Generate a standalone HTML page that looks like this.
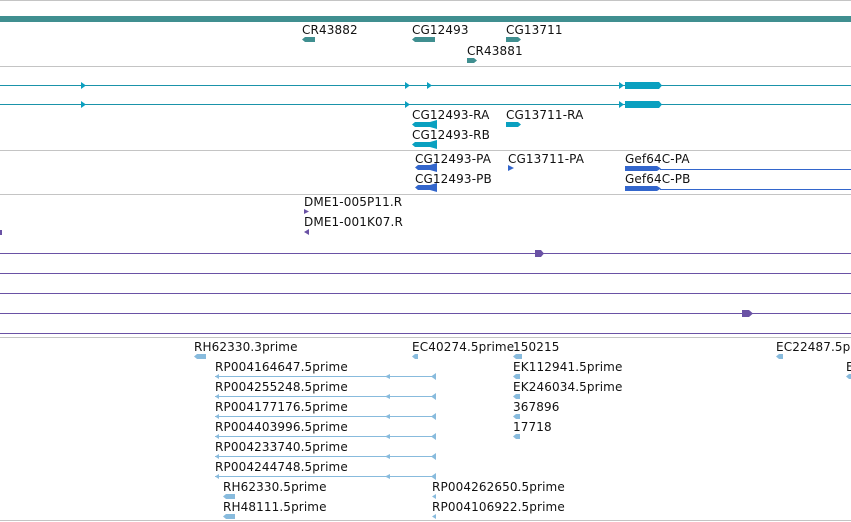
<!DOCTYPE html>
<html><head><meta charset="utf-8"><style>
html,body{margin:0;padding:0;background:#fff;width:851px;height:522px;overflow:hidden}
svg{display:block}
text{font-family:"DejaVu Sans","Liberation Sans",sans-serif;font-size:12px;fill:#111;letter-spacing:0.12px}
</style></head><body>
<svg width="851" height="522" viewBox="0 0 851 522" xmlns="http://www.w3.org/2000/svg">
<g fill="#c4c4c4">
<rect x="0" y="0" width="851" height="1"/>
<rect x="0" y="66" width="851" height="1"/>
<rect x="0" y="150" width="851" height="1"/>
<rect x="0" y="194" width="851" height="1"/>
<rect x="0" y="337" width="851" height="1"/>
<rect x="0" y="520" width="851" height="1"/>
</g>
<rect x="0" y="16" width="851" height="6" fill="#408f90"/>
<g fill="#408f90">
<polygon points="302,39.5 305,37 315,37 315,42 305,42"/>
<polygon points="412,39.5 415,37 435,37 435,42 415,42"/>
<polygon points="506,37 518,37 521,39.5 518,42 506,42"/>
<polygon points="467,58 474,58 477,60.5 474,63 467,63"/>
</g>
<text x="302" y="34">CR43882</text>
<text x="412" y="34">CG12493</text>
<text x="506" y="34">CG13711</text>
<text x="467" y="55">CR43881</text>
<g fill="#1a93aa">
<rect x="0" y="85" width="851" height="1"/>
<rect x="0" y="104" width="851" height="1"/>
</g>
<g fill="#0aa0c0">
<polygon points="81,82 86,85.5 81,89"/>
<polygon points="405,82 410,85.5 405,89"/>
<polygon points="427,82 432,85.5 427,89"/>
<polygon points="619,82 624,85.5 619,89"/>
<polygon points="625,82 659,82 662,85.5 659,89 625,89"/>
<polygon points="81,101 86,104.5 81,108"/>
<polygon points="405,101 410,104.5 405,108"/>
<polygon points="619,101 624,104.5 619,108"/>
<polygon points="625,101 659,101 662,104.5 659,108 625,108"/>
<polygon points="412,124.5 415,122 430,122 437,120 437,129 430,127 415,127"/>
<polygon points="412,144.5 415,142 430,142 437,140 437,149 430,147 415,147"/>
<polygon points="506,122 518,122 521,124.5 518,127 506,127"/>
</g>
<text x="412" y="119">CG12493-RA</text>
<text x="506" y="119">CG13711-RA</text>
<text x="412" y="139">CG12493-RB</text>
<g fill="#3366cc">
<polygon points="415,167.5 418,165 430,165 437,163 437,172 430,170 418,170"/>
<polygon points="415,187.5 418,185 430,185 437,183 437,192 430,190 418,190"/>
<polygon points="508,165 514,168 508,171"/>
<polygon points="625,166 657,166 661,168.5 657,171 625,171"/>
<polygon points="625,186 657,186 661,188.5 657,191 625,191"/>
<rect x="660" y="169" width="191" height="1"/>
<rect x="660" y="189" width="191" height="1"/>
</g>
<text x="415" y="163">CG12493-PA</text>
<text x="508" y="163">CG13711-PA</text>
<text x="625" y="163">Gef64C-PA</text>
<text x="415" y="183">CG12493-PB</text>
<text x="625" y="183">Gef64C-PB</text>
<g fill="#6a52a5">
<polygon points="304,209 309,211.5 304,214"/>
<polygon points="309,229 304,232 309,235"/>
<rect x="0" y="230" width="2" height="5"/>
<rect x="0" y="253" width="851" height="1"/>
<rect x="0" y="273" width="851" height="1"/>
<rect x="0" y="293" width="851" height="1"/>
<rect x="0" y="313" width="851" height="1"/>
<rect x="0" y="333" width="851" height="1"/>
<polygon points="535,250 541,250 544,253.5 541,257 535,257"/>
<polygon points="742,310 749,310 753,313.5 749,317 742,317"/>
</g>
<text x="304" y="206">DME1-005P11.R</text>
<text x="304" y="226">DME1-001K07.R</text>
<g fill="#88bbdd">
<polygon points="194,356.5 197,354 206,354 206,359 197,359"/>
<polygon points="412,356.5 415,354 418,354 418,359 415,359"/>
<polygon points="513,356.5 516,354 522,354 522,359 516,359"/>
<polygon points="776,356.5 779,354 783,354 783,359 779,359"/>
<polygon points="846,376.5 849,374 851,374 851,379 849,379"/>
<polygon points="513,376.5 516,374 520,374 520,379 516,379"/>
<polygon points="513,396.5 516,394 520,394 520,399 516,399"/>
<polygon points="513,416.5 516,414 520,414 520,419 516,419"/>
<polygon points="513,436.5 516,434 520,434 520,439 516,439"/>
<polygon points="223,496.5 226,494 235,494 235,499 226,499"/>
<polygon points="223,516.5 226,514 235,514 235,519 226,519"/>
<polygon points="432,496.5 436,494 436,499"/>
<polygon points="432,516.5 436,514 436,519"/>
</g>
<g fill="#88bbdd">
<rect x="215" y="376" width="221" height="1"/>
<polygon points="215,376.5 219,374 219,379"/>
<polygon points="385,376.5 390,374 390,379"/>
<polygon points="431,376.5 436,373 436,380"/>
<rect x="215" y="396" width="221" height="1"/>
<polygon points="215,396.5 219,394 219,399"/>
<polygon points="385,396.5 390,394 390,399"/>
<polygon points="431,396.5 436,393 436,400"/>
<rect x="215" y="416" width="221" height="1"/>
<polygon points="215,416.5 219,414 219,419"/>
<polygon points="385,416.5 390,414 390,419"/>
<polygon points="431,416.5 436,413 436,420"/>
<rect x="215" y="436" width="221" height="1"/>
<polygon points="215,436.5 219,434 219,439"/>
<polygon points="385,436.5 390,434 390,439"/>
<polygon points="431,436.5 436,433 436,440"/>
<rect x="215" y="456" width="221" height="1"/>
<polygon points="215,456.5 219,454 219,459"/>
<polygon points="385,456.5 390,454 390,459"/>
<polygon points="431,456.5 436,453 436,460"/>
<rect x="215" y="476" width="221" height="1"/>
<polygon points="215,476.5 219,474 219,479"/>
<polygon points="385,476.5 390,474 390,479"/>
<polygon points="431,476.5 436,473 436,480"/>
</g>
<text x="194" y="351">RH62330.3prime</text>
<text x="412" y="351">EC40274.5prime</text>
<text x="513" y="351">150215</text>
<text x="776" y="351">EC22487.5prime</text>
<text x="846" y="371">E</text>
<text x="215" y="371">RP004164647.5prime</text>
<text x="215" y="391">RP004255248.5prime</text>
<text x="215" y="411">RP004177176.5prime</text>
<text x="215" y="431">RP004403996.5prime</text>
<text x="215" y="451">RP004233740.5prime</text>
<text x="215" y="471">RP004244748.5prime</text>
<text x="513" y="371">EK112941.5prime</text>
<text x="513" y="391">EK246034.5prime</text>
<text x="513" y="411">367896</text>
<text x="513" y="431">17718</text>
<text x="223" y="491">RH62330.5prime</text>
<text x="223" y="511">RH48111.5prime</text>
<text x="432" y="491">RP004262650.5prime</text>
<text x="432" y="511">RP004106922.5prime</text>
</svg>
</body></html>
